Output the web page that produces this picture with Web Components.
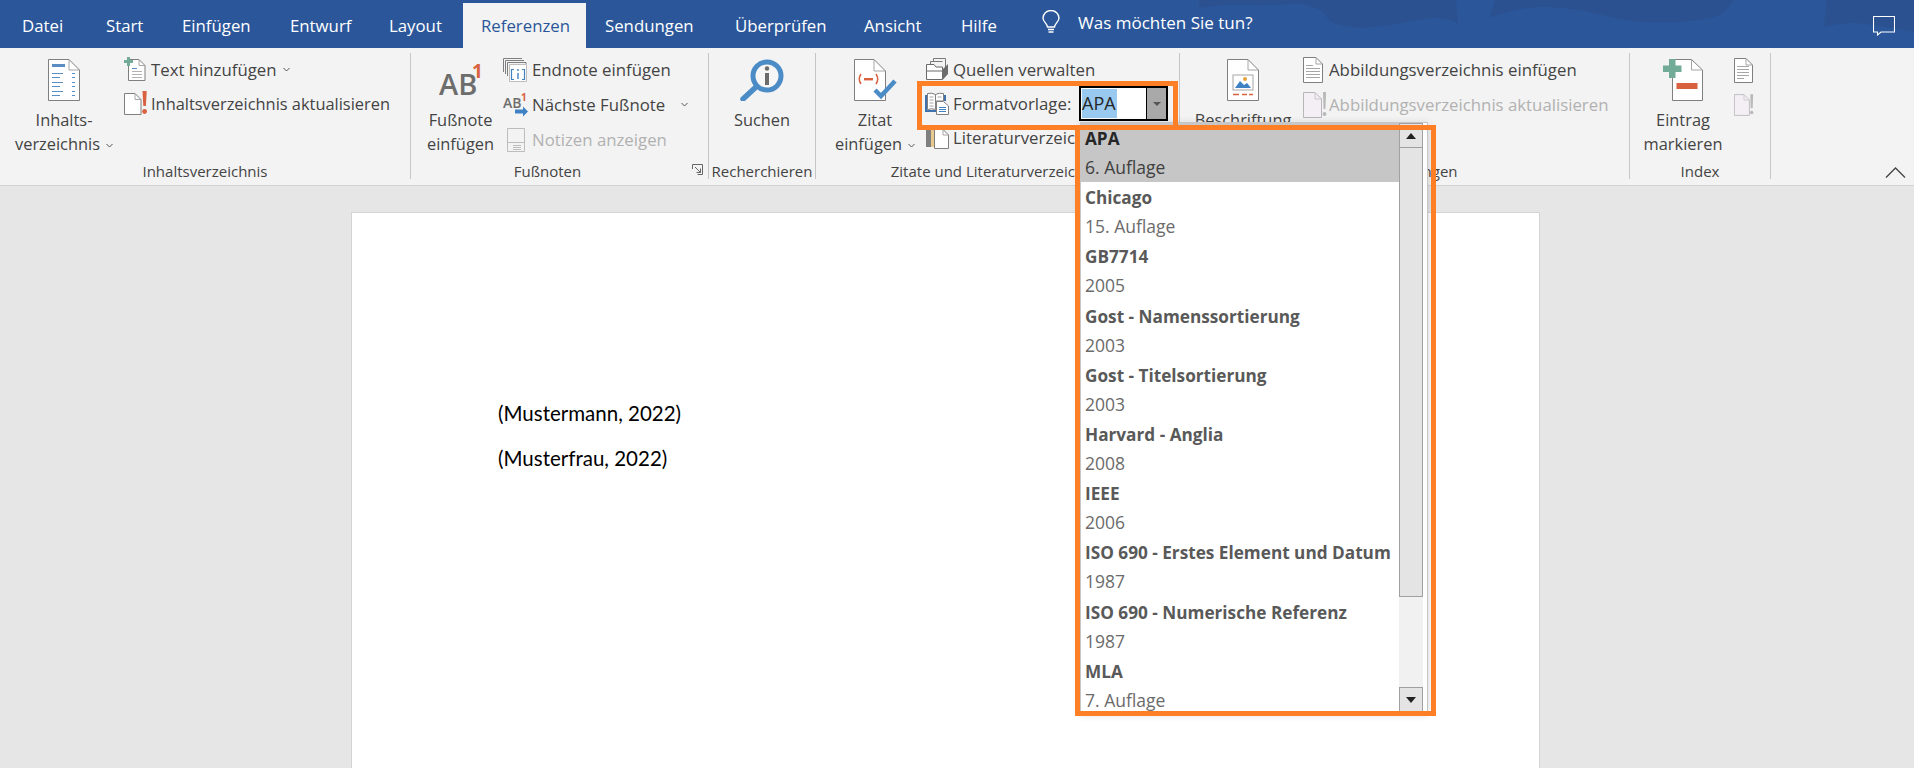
<!DOCTYPE html>
<html lang="de">
<head>
<meta charset="utf-8">
<title>Referenzen</title>
<style>
  html, body { margin: 0; height: 100%; overflow: hidden; }
  body {
    width: 1914px;
    height: 768px;
    position: relative;
    display: flex;
    flex-direction: column;
    font-family: "Open Sans", "Liberation Sans", sans-serif;
    background: #e6e6e6;
  }
</style>
</head>
<body>

<word-titlebar>
  <word-tab style="--w:87px;--pl:22px">Datei</word-tab>
  <word-tab style="--w:76px;--pl:19px">Start</word-tab>
  <word-tab style="--w:108px;--pl:19px">Einfügen</word-tab>
  <word-tab style="--w:99px;--pl:19px">Entwurf</word-tab>
  <word-tab style="--w:93px;--pl:19px">Layout</word-tab>
  <word-tab active style="--w:123px;--pl:18px">Referenzen</word-tab>
  <word-tab style="--w:130px;--pl:19px">Sendungen</word-tab>
  <word-tab style="--w:129px;--pl:19px">Überprüfen</word-tab>
  <word-tab style="--w:97px;--pl:19px">Ansicht</word-tab>
  <word-tab style="--w:99px;--pl:19px">Hilfe</word-tab>
</word-titlebar>

<word-ribbon>
  <ribbon-group label="Inhaltsverzeichnis" style="--group-w:411px;--pad:4px">
    <large-button icon="toc" chevron style="--btn-w:120px">Inhalts-<br>verzeichnis</large-button>
    <small-column style="--icon-w:27px;--col-ml:0px;--row-h:34px">
      <small-button icon="addtext" chevron style="--chev-gap:6px">Text hinzufügen</small-button>
      <small-button icon="update" style="font-size:16.400px">Inhaltsverzeichnis aktualisieren</small-button>
    </small-column>
  </ribbon-group>

  <ribbon-group label="Fußnoten" launcher style="--group-w:298px;--pad:7px">
    <large-button icon="footnote" style="--btn-w:85px">Fußnote<br>einfügen</large-button>
    <small-column style="--icon-w:29px;--col-ml:0px">
      <small-button icon="endnote">Endnote einfügen</small-button>
      <small-button icon="nextnote" chevron style="--chev-gap:16px">Nächste Fußnote</small-button>
      <small-button icon="notes" disabled>Notizen anzeigen</small-button>
    </small-column>
  </ribbon-group>

  <ribbon-group label="Recherchieren" style="--group-w:107px;--pad:0px">
    <large-button icon="search" style="--btn-w:106px">Suchen</large-button>
  </ribbon-group>

  <ribbon-group label="Zitate und Literaturverzeichnis" style="--group-w:364px;--pad:13px">
    <large-button icon="cite" chevron style="--btn-w:92px">Zitat<br>einfügen</large-button>
    <small-column style="--icon-w:28px;--col-ml:4px;--row-h:34px">
      <small-button icon="sources">Quellen verwalten</small-button>
      <small-button icon="styles">Formatvorlage:</small-button>
      <small-button icon="biblio">Literaturverzeichnis</small-button>
    </small-column>
  </ribbon-group>

  <ribbon-group label="Beschriftungen" style="--group-w:450px;--pad:13px">
    <large-button icon="caption" style="--btn-w:100px">Beschriftung<br>einfügen</large-button>
    <small-column style="--icon-w:26px;--col-ml:10px">
      <small-button icon="figtable">Abbildungsverzeichnis einfügen</small-button>
      <small-button icon="figupdate" disabled>Abbildungsverzeichnis aktualisieren</small-button>
    </small-column>
  </ribbon-group>

  <ribbon-group label="Index" style="--group-w:141px;--pad:2px">
    <large-button icon="mark" style="--btn-w:102px">Eintrag<br>markieren</large-button>
    <small-column style="--icon-w:20px;--col-ml:0px">
      <small-button icon="indexdoc"></small-button>
      <small-button icon="indexupdate"></small-button>
    </small-column>
  </ribbon-group>
</word-ribbon>

<word-document>
  <p>(Mustermann, 2022)</p>
  <p>(Musterfrau, 2022)</p>
</word-document>

<style-combo></style-combo>

<style-dropdown>
  <style-item title-text="APA" selected>6. Auflage</style-item>
  <style-item title-text="Chicago">15. Auflage</style-item>
  <style-item title-text="GB7714">2005</style-item>
  <style-item title-text="Gost - Namenssortierung">2003</style-item>
  <style-item title-text="Gost - Titelsortierung">2003</style-item>
  <style-item title-text="Harvard - Anglia">2008</style-item>
  <style-item title-text="IEEE">2006</style-item>
  <style-item title-text="ISO 690 - Erstes Element und Datum">1987</style-item>
  <style-item title-text="ISO 690 - Numerische Referenz">1987</style-item>
  <style-item title-text="MLA">7. Auflage</style-item>
</style-dropdown>

<mark-box style="--x:917px;--y:81px;--w:261px;--h:49px"></mark-box>
<mark-box style="--x:1075px;--y:125px;--w:361px;--h:591px"></mark-box>

<script>
const page = 'fill="#fff" stroke="#7f7f7f"';
const dim = 'fill="#f3eff5" stroke="#b9b5bb"';

const ICONS = {
  toc: `<svg width="32" height="42" viewBox="0 0 32 42"><path d="M.5.5H21L31.5 11V41.5H.5z" ${page}/><path d="M21 .5V11H31.5" fill="none" stroke="#a6a6a6"/>
    <rect x="4" y="5" width="13" height="3" fill="#5b8cc4"/><path d="M4 14.500H15M4 18.500H12M4 23.500H15M4 27.500H12M4 32.500H15M4 36.500H12M24 14.500H27M24 18.500H27M24 23.500H27M24 27.500H27M24 32.500H27M24 36.500H27" stroke="#5b8cc4"/></svg>`,
  addtext: `<svg width="22" height="24" viewBox="0 0 22 24"><path d="M4.500 2.500H15L21 8.500V23.500H4.500z" ${page}/><path d="M15 2.500V8.500H21" fill="none" stroke="#a6a6a6"/>
    <path d="M8 11.500H13M8 14.500H18M8 17.500H18M8 20.500H18" stroke="#b3b3b3"/><path d="M8 11.500H13" stroke="#5b8cc4"/><path d="M3 0h3v3h3v3H6v3H3V6H0V3h3z" fill="#72ab97"/></svg>`,
  update: `<svg width="24" height="24" viewBox="0 0 24 24"><path d="M.5 2.500H11L17 8.500V23.500H.5z" ${page}/><path d="M11 2.500V8.500H17" fill="none" stroke="#a6a6a6"/>
    <path d="M18.500 0h4.200l-.8 15h-2.600z" fill="#d8613f"/><circle cx="20.600" cy="20.500" r="2.400" fill="#d8613f"/></svg>`,
  footnote: `<svg width="44" height="34" viewBox="0 0 44 34"><text x="0" y="32" font-family="Open Sans, sans-serif" font-size="29" font-weight="600" fill="#6d6d6d">AB</text><text x="33" y="15" font-family="Open Sans, sans-serif" font-size="19" font-weight="700" fill="#d8613f">1</text></svg>`,
  endnote: `<svg width="24" height="24" viewBox="0 0 24 24"><path d="M.5 14V.5H19M2.500 16V2.500H21M4.500 18V4.500H23V6" fill="none" stroke="#7f7f7f"/><path d="M6.500 23.500V6.500H23.500V23.500z" fill="#fff" stroke="#bdbdbd"/>
    <path d="M11 11.500H8.500V21.500H11M19 11.500H21.500V21.500H19" fill="none" stroke="#3f82c4" stroke-width="1.200"/><path d="M15 11V13M15 15V21" stroke="#3f82c4" stroke-width="1.400"/></svg>`,
  nextnote: `<svg width="26" height="26" viewBox="0 0 26 26"><text x="0" y="16" font-family="Open Sans, sans-serif" font-size="14" font-weight="600" fill="#6d6d6d">AB</text><text x="18" y="9" font-family="Open Sans, sans-serif" font-size="10" font-weight="700" fill="#d8613f">1</text>
    <path d="M12 17.500H20V14.500L25 19.500 20 24.500V21.500H12z" fill="#3f82c4"/></svg>`,
  notes: `<svg width="24" height="24" viewBox="0 0 24 24"><path d="M4.500.5H21.500V23.500H4.500zM4.500 14.500H21.500" fill="#f3f3f3" stroke="#bdbdbd"/><path d="M10 17.500H18M10 19.500H18M10 21.500H18" stroke="#bdbdbd"/></svg>`,
  search: `<svg width="44" height="42" viewBox="0 0 44 42"><circle cx="27" cy="17" r="14" fill="#f6f6f6" stroke="#4c8cc6" stroke-width="5"/><path d="M16 28 3 40" stroke="#4c8cc6" stroke-width="5.500" stroke-linecap="round"/>
    <circle cx="27" cy="9.500" r="2.200" fill="#6b6b6b"/><rect x="25" y="14" width="4" height="12" fill="#6b6b6b"/></svg>`,
  cite: `<svg width="43" height="42" viewBox="0 0 43 42"><path d="M.5.5H20L31.500 12V41.500H.5z" ${page}/><path d="M20 .5V12H31.500" fill="none" stroke="#a6a6a6"/>
    <path d="M7 15Q3.500 20 7 25M22 15Q25.500 20 22 25" fill="none" stroke="#d8613f" stroke-width="1.500"/><rect x="10" y="19" width="9" height="2.400" fill="#d8613f"/>
    <path d="M21 31l6 6L41 22" fill="none" stroke="#4c8cc6" stroke-width="4.500"/></svg>`,
  sources: `<svg width="24" height="22" viewBox="0 0 24 22"><path d="M8.500 4V.5H20.500V10M5.500 7V3.500H17.500" fill="none" stroke="#7a7a7a"/><path d="M1.500 21.500V6.500H9L11 9H17.500V21.500z" fill="#fff" stroke="#6b6b6b"/><path d="M1.500 13H17.500" stroke="#6b6b6b"/>
    <path d="M18 11 23 6V16L18 21.500z" fill="#6b6b6b"/></svg>`,
  styles: `<svg width="24" height="23" viewBox="0 0 24 23"><path d="M1 3V19H14M20 3V9" fill="none" stroke="#3f72ad" stroke-width="2"/><path d="M2.500 1.500Q7 .5 10.500 2.500V17.500Q7 16 2.500 17.500z" fill="#fff" stroke="#7f7f7f"/><path d="M10.500 2.500Q14 .5 18.500 1.500V9H10.500z" fill="#fff" stroke="#7f7f7f"/>
    <path d="M4.500 5H8.500M4.500 8H8.500M4.500 11H8.500M4.500 14H8.500M12.500 5H16.500" stroke="#a6a6a6"/><path d="M11.500 9.500H18.500L23.500 14V22.500H11.500z" ${page}/><path d="M14 15.500H21M14 17.500H21M14 19.500H21" stroke="#3f82c4"/></svg>`,
  biblio: `<svg width="24" height="24" viewBox="0 0 24 24"><rect x="1" y="1" width="5" height="21" fill="#7f7f7f"/><rect x="6" y="1" width="5" height="21" fill="#e8c98d"/><rect x="11" y="1" width="4" height="21" fill="#e8c98d"/><path d="M9.500 4.500H18L23.500 10V23.500H9.500z" ${page}/><path d="M18 4.500V10H23.500" fill="none" stroke="#a6a6a6"/></svg>`,
  caption: `<svg width="32" height="42" viewBox="0 0 32 42"><path d="M.5.5H21L31.500 11V41.500H.5z" ${page}/><path d="M21 .5V11H31.500" fill="none" stroke="#a6a6a6"/>
    <rect x="6" y="16" width="20" height="15" fill="#fff" stroke="#a6a6a6"/><circle cx="18" cy="20" r="2" fill="#e8a33d"/><path d="M8 29l5-7 4 4 3-2 4 5z" fill="#3f82c4"/><path d="M6 35.500H12M15 35.500H20M22 35.500H26" stroke="#d8613f" stroke-width="1.500"/></svg>`,
  figtable: `<svg width="20" height="26" viewBox="0 0 20 26"><path d="M.5.5H13L19.500 7V25.500H.5z" ${page}/><path d="M13 .5V7H19.500" fill="none" stroke="#a6a6a6"/><path d="M3 8.500H10M3 11.500H17M3 14.500H17M3 17.500H17M3 20.500H17" stroke="#a6a6a6"/></svg>`,
  figupdate: `<svg width="24" height="26" viewBox="0 0 24 26"><path d="M.5.5H12L18.500 7V25.500H.5z" ${dim}/><path d="M12 .5V7H18.500" fill="none" stroke="#c8c8c8"/><path d="M20 0h3l-.5 17h-2z" fill="#b9b9b9"/><circle cx="21.500" cy="22" r="2" fill="#b9b9b9"/></svg>`,
  mark: `<svg width="40" height="42" viewBox="0 0 40 42"><path d="M9.500.5H28.500L39.500 11V41.500H9.500z" ${page}/><path d="M28.500 .5V11H39.500" fill="none" stroke="#a6a6a6"/>
    <path d="M6 0h6.500v6.500H18.500v6.500H12.500V19H6V13H0V6.500H6z" fill="#72ab97"/><rect x="13.500" y="24" width="21" height="6" fill="#d8613f"/></svg>`,
  indexdoc: `<svg width="19" height="26" viewBox="0 0 19 26"><path d="M.5 1.500H12L18.500 8V25.500H.5z" ${page}/><path d="M12 1.500V8H18.500" fill="none" stroke="#a6a6a6"/><path d="M3 9.500H15M3 12.500H15M3 15.500H15M3 18.500H15M3 21.500H10" stroke="#a6a6a6"/></svg>`,
  indexupdate: `<svg width="24" height="26" viewBox="0 0 24 26"><path d="M.5.5H12L18.500 7V25.500H.5z" ${dim}/><path d="M12 .5V7H18.500" fill="none" stroke="#c8c8c8"/><path d="M19.500 0h3.500l-.6 17h-2.300z" fill="#b9b9b9"/><circle cx="21.200" cy="22" r="2.100" fill="#b9b9b9"/></svg>`
};

class WordTitlebar extends HTMLElement {
  constructor() {
    super();
    this.attachShadow({ mode: 'open' });
    this.shadowRoot.innerHTML = `
      <style>
        :host {
          display: flex;
          position: relative;
          flex: none;
          height: 48px;
          background: #2b579a;
          overflow: hidden;
        }
        .wave { position: absolute; left: 1100px; top: 0; }
        .tabs { display: flex; align-items: flex-end; position: relative; }
        .tell { display: flex; align-items: center; gap: 17px; height: 48px; color: #fff; font-size: 17px; position: relative; }
        .tell span { padding-bottom: 4px; }
        .tell svg { display: block; margin-bottom: 4px; }
        .comment { position: absolute; left: 1873px; top: 16px; }
      </style>
      <svg class="wave" width="814" height="48" viewBox="0 0 814 48" fill="#2b5190">
        <path d="M99 8C130 2 170 8 197 3 210 6 218 8 223 12 226 18 230 21 234 23 248 28 262 28 270 27 295 26 320 18 337 18 345 18 352 21 358 23L356 0H99z"/>
        <path d="M395 0C394 6 391 12 389 18 405 12 425 7 441 7 460 7 475 9 493 13 512 17 530 22 545 22 565 23 585 22 597 20 610 19 618 16 623 13 628 8 631 4 633 0z"/>
        <path d="M727 0C725 9 725 18 724 27 733 25 745 23 753 23 775 24 795 29 814 32V0z"/>
      </svg>
      <div class="tabs"><slot></slot></div>
      <div class="tell">
        <svg width="20" height="24" viewBox="0 0 20 24" fill="none" stroke="#fff" stroke-width="1.400"><path d="M6.500 17C6 13 2 12 2 8a8 7.500 0 0 1 16 0c0 4-4 5-4.500 9z"/><path d="M7 19.500H13M7.500 22H12.500"/></svg>
        <span>Was möchten Sie tun?</span>
      </div>
      <svg class="comment" width="22" height="20" viewBox="0 0 22 20" fill="none" stroke="#fff" stroke-width="1.100"><path d="M.5.5H21.500V16H8L4.500 19V16H.5z"/></svg>
    `;
  }
}

class WordTab extends HTMLElement {
  constructor() {
    super();
    this.attachShadow({ mode: 'open' });
    this.shadowRoot.innerHTML = `
      <style>
        :host {
          display: flex;
          align-items: center;
          box-sizing: border-box;
          width: var(--w);
          padding-left: var(--pl);
          padding-bottom: 1px;
          height: 45px;
          color: #fff;
          font-size: 16.800px;
          white-space: nowrap;
        }
        :host([active]) { background: #f3f3f3; color: #2b579a; }
      </style>
      <slot></slot>
    `;
  }
}

class WordRibbon extends HTMLElement {
  constructor() {
    super();
    this.attachShadow({ mode: 'open' });
    this.shadowRoot.innerHTML = `
      <style>
        :host {
          display: flex;
          flex: none;
          box-sizing: border-box;
          height: 138px;
          background: #f3f3f3;
          border-bottom: 1px solid #d2d2d2;
          color: #444;
          font-size: 16.800px;
        }
        svg { margin: auto 8px 7px auto; display: block; }
      </style>
      <slot></slot>
      <svg width="21" height="11" viewBox="0 0 21 11" fill="none" stroke="#444" stroke-width="1.300"><path d="M1 10.500 10.500 1 20 10.500"/></svg>
    `;
  }
}

class RibbonGroup extends HTMLElement {
  constructor() {
    super();
    this.attachShadow({ mode: 'open' });
    this.shadowRoot.innerHTML = `
      <style>
        :host {
          display: flex;
          flex-direction: column;
          flex: none;
          box-sizing: border-box;
          width: var(--group-w);
          height: 126px;
          margin-top: 5px;
          border-right: 1px solid #c6c6c6;
        }
        .body { display: flex; height: 115px; padding-left: var(--pad); }
        .foot { display: flex; height: 16px; line-height: 16px; font-size: 15px; color: #444; white-space: nowrap; }
        .label { flex: 1; text-align: center; }
        .launcher { display: none; width: 24px; }
        :host([launcher]) .launcher { display: block; }
        .launcher svg { display: block; margin: 1px 0 0 8px; }
      </style>
      <div class="body"><slot></slot></div>
      <div class="foot">
        <span class="label"></span>
        <span class="launcher"><svg width="11" height="11" viewBox="0 0 11 11" fill="none" stroke="#666"><path d="M.5 5V.5H10.500V10.500H5.500M3 3l5.500 5.500M8.500 4.500V8.500H4.500"/></svg></span>
      </div>
    `;
  }

  connectedCallback() {
    this.shadowRoot.querySelector('.label').textContent = this.getAttribute('label');
  }
}

class LargeButton extends HTMLElement {
  constructor() {
    super();
    this.attachShadow({ mode: 'open' });
    this.shadowRoot.innerHTML = `
      <style>
        :host {
          display: flex;
          flex-direction: column;
          align-items: center;
          flex: none;
          box-sizing: border-box;
          width: var(--btn-w);
          padding-top: 6px;
          font-size: 16.400px;
          line-height: 24px;
          text-align: center;
          white-space: nowrap;
        }
        .icon { height: 42px; margin-bottom: 7px; display: flex; align-items: center; }
        .icon svg { display: block; }
        .chev { display: none; margin-left: 6px; vertical-align: 2px; }
        :host([chevron]) .chev { display: inline-block; }
      </style>
      <div class="icon"></div>
      <div><slot></slot><svg class="chev" width="7" height="5" viewBox="0 0 7 5" fill="none" stroke="#555"><path d="M.5 1 3.500 4 6.500 1"/></svg></div>
    `;
  }

  connectedCallback() {
    this.shadowRoot.querySelector('.icon').innerHTML = ICONS[this.getAttribute('icon')] || '';
  }
}

class SmallColumn extends HTMLElement {
  constructor() {
    super();
    this.attachShadow({ mode: 'open' });
    this.shadowRoot.innerHTML = `
      <style>
        :host { display: flex; flex-direction: column; margin-left: var(--col-ml); }
      </style>
      <slot></slot>
    `;
  }
}

class SmallButton extends HTMLElement {
  constructor() {
    super();
    this.attachShadow({ mode: 'open' });
    this.shadowRoot.innerHTML = `
      <style>
        :host {
          display: flex;
          align-items: center;
          box-sizing: border-box;
          height: var(--row-h, 35px);
          padding-bottom: 2px;
          white-space: nowrap;
        }
        :host([disabled]) { color: #b1b1b1; }
        .icon { width: var(--icon-w); flex: none; display: flex; align-items: center; }
        .icon svg { display: block; }
        .chev { display: none; margin-left: var(--chev-gap, 8px); }
        :host([chevron]) .chev { display: block; }
      </style>
      <div class="icon"></div>
      <slot></slot>
      <svg class="chev" width="7" height="5" viewBox="0 0 7 5" fill="none" stroke="#555"><path d="M.5 1 3.500 4 6.500 1"/></svg>
    `;
  }

  connectedCallback() {
    this.shadowRoot.querySelector('.icon').innerHTML = ICONS[this.getAttribute('icon')] || '';
  }
}

class WordDocument extends HTMLElement {
  constructor() {
    super();
    this.attachShadow({ mode: 'open' });
    this.shadowRoot.innerHTML = `
      <style>
        :host { display: block; flex: 1; background: #e6e6e6; padding: 26px 0 0 351px; overflow: hidden; }
        .sheet {
          box-sizing: border-box;
          width: 1189px;
          height: 700px;
          background: #fff;
          border: 1px solid #d4d4d4;
          padding: 186px 0 0 146px;
          color: #000;
          font: 20.500px/28px Lato, "Liberation Sans", sans-serif;
        }
        ::slotted(p) { margin: 0 0 17px; }
      </style>
      <div class="sheet"><slot></slot></div>
    `;
  }
}

class StyleCombo extends HTMLElement {
  constructor() {
    super();
    this.attachShadow({ mode: 'open' });
    this.shadowRoot.innerHTML = `
      <style>
        :host {
          position: absolute;
          left: 1079px;
          top: 86px;
          box-sizing: border-box;
          width: 89px;
          height: 35px;
          display: flex;
          background: #fff;
          border: 2px solid #000;
        }
        .value { flex: 1; display: flex; align-items: center; padding-left: 1px; }
        .value span { background: #99c9ef; color: #262626; font-size: 18px; line-height: 29px; padding-right: 1px; }
        .drop { width: 19px; background: #a9a9a9; border-left: 1px solid #000; display: flex; align-items: center; justify-content: center; }
        .drop i { border: 4px solid transparent; border-top: 4px solid #555; border-bottom: 0; }
      </style>
      <div class="value"><span>APA</span></div>
      <div class="drop"><i></i></div>
    `;
  }
}

class StyleDropdown extends HTMLElement {
  constructor() {
    super();
    this.attachShadow({ mode: 'open' });
    this.shadowRoot.innerHTML = `
      <style>
        :host {
          position: absolute;
          left: 1080px;
          top: 122px;
          box-sizing: border-box;
          width: 348px;
          height: 590px;
          display: flex;
          background: #fff;
          border: 1px solid #c6c6c6;
          border-bottom: 0;
          box-shadow: 0 2px 8px rgba(0,0,0,.18);
          overflow: hidden;
        }
        .list { width: 318px; flex: none; overflow: hidden; }
        .bar {
          width: 24px;
          flex: none;
          display: flex;
          flex-direction: column;
          background: #f1f1f1;
        }
        .btn { height: 25px; flex: none; box-sizing: border-box; background: #e4e4e4; border: 1px solid #a0a0a0; display: flex; align-items: center; justify-content: center; }
        .btn i { border: 5.500px solid transparent; }
        .up i { border-bottom: 6px solid #222; border-top: 0; }
        .down i { border-top: 6px solid #222; border-bottom: 0; }
        .thumb { height: 449px; flex: none; box-sizing: border-box; background: #e4e4e4; border: 1px solid #a0a0a0; border-top-width: 0; }
        .track { flex: 1; }
      </style>
      <div class="list"><slot></slot></div>
      <div class="bar">
        <div class="btn up"><i></i></div>
        <div class="thumb"></div>
        <div class="track"></div>
        <div class="btn down"><i></i></div>
      </div>
    `;
  }
}

class StyleItem extends HTMLElement {
  constructor() {
    super();
    this.attachShadow({ mode: 'open' });
    this.shadowRoot.innerHTML = `
      <style>
        :host {
          display: block;
          box-sizing: border-box;
          height: 59.200px;
          padding-left: 4px;
          color: #6b6b6b;
          font-size: 17.500px;
          line-height: 24px;
          white-space: nowrap;
        }
        :host([selected]) { background: #c6c6c6; color: #404040; }
        b { display: block; color: #595959; font-weight: 700; font-size: 17.200px; line-height: 32px; }
        :host([selected]) b { color: #262626; }
      </style>
      <b></b>
      <slot></slot>
    `;
  }

  connectedCallback() {
    this.shadowRoot.querySelector('b').textContent = this.getAttribute('title-text');
  }
}

class MarkBox extends HTMLElement {
  constructor() {
    super();
    this.attachShadow({ mode: 'open' });
    this.shadowRoot.innerHTML = `
      <style>
        :host {
          position: absolute;
          left: var(--x);
          top: var(--y);
          width: var(--w);
          height: var(--h);
          box-sizing: border-box;
          border: 5px solid #ff7f27;
          pointer-events: none;
        }
      </style>
    `;
  }
}

customElements.define('word-titlebar', WordTitlebar);
customElements.define('word-tab', WordTab);
customElements.define('word-ribbon', WordRibbon);
customElements.define('ribbon-group', RibbonGroup);
customElements.define('large-button', LargeButton);
customElements.define('small-column', SmallColumn);
customElements.define('small-button', SmallButton);
customElements.define('word-document', WordDocument);
customElements.define('style-combo', StyleCombo);
customElements.define('style-dropdown', StyleDropdown);
customElements.define('style-item', StyleItem);
customElements.define('mark-box', MarkBox);
</script>
</body>
</html>
